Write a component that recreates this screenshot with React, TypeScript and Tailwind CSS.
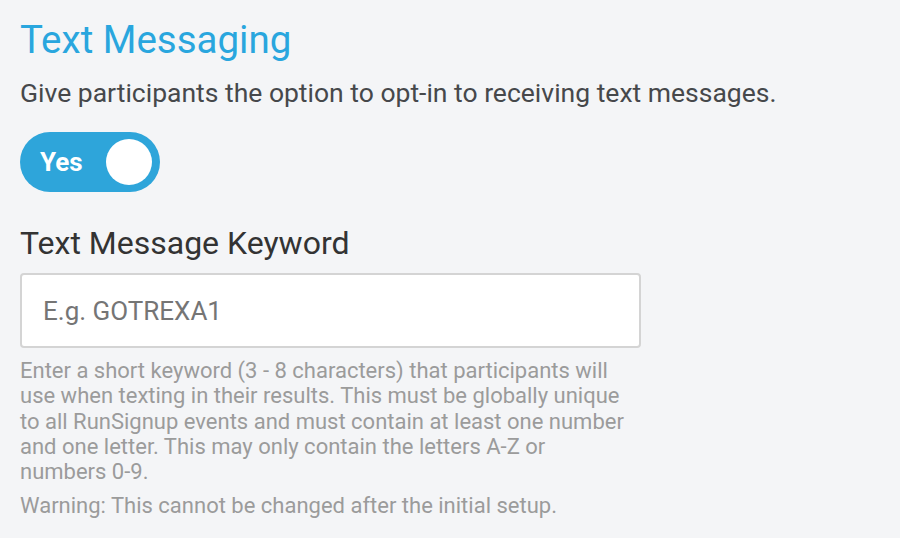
export default function App() {
  return (
    <div className="min-h-[538px] w-[900px] bg-[#f4f5f7] px-5 pt-[18px] [font-family:Roboto,'Noto_Sans',sans-serif]">
      <h2 className="text-[38.5px] leading-[44px] font-normal text-[#29a6de]">Text Messaging</h2>
      <p className="mt-[15px] text-[26.5px] leading-[32px] text-[#46484b]">
        Give participants the option to opt-in to receiving text messages.
      </p>
      <button
        type="button"
        className="mt-[23px] flex h-[60px] w-[140px] items-center justify-between rounded-full bg-[#2ea5da] pl-5 pr-[8px]"
      >
        <span className="text-[26px] font-bold text-white">Yes</span>
        <span className="h-[46px] w-[46px] rounded-full bg-white" />
      </button>
      <label className="mt-[32px] block text-[32px] leading-[38px] text-[#333333]">Text Message Keyword</label>
      <input
        type="text"
        placeholder="E.g. GOTREXA1"
        className="mt-[11px] block h-[75px] w-[621px] rounded-[4px] border-2 border-[#d4d4d4] bg-white px-[21px] text-[26px] text-[#333] placeholder:text-[#757575] focus:outline-none"
      />
      <p className="mt-[10px] w-[610px] text-[22px] leading-[25.3px] text-[#9b9b9b]">
        Enter a short keyword (3 - 8 characters) that participants will use when texting in their results. This must be
        globally unique to all RunSignup events and must contain at least one number and one letter. This may only
        contain the letters A-Z or numbers 0-9.
      </p>
      <p className="mt-[9px] text-[22px] leading-[25.3px] text-[#9b9b9b]">
        Warning: This cannot be changed after the initial setup.
      </p>
    </div>
  );
}
